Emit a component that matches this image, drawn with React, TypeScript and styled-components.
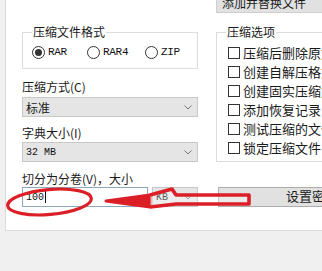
import React from 'react'
import styled, { createGlobalStyle } from 'styled-components'

const GlobalStyle = createGlobalStyle`
  html, body {
    margin: 0;
    padding: 0;
    background: #f0f0f0;
    overflow: hidden;
  }
  body {
    font-family: "Noto Sans CJK SC", "Noto Sans", sans-serif;
    font-size: 12px;
    color: #1a1a1a;
  }
`

const RED = '#dc1f26'

const Screen = styled.div`
  position: relative;
  width: 322px;
  height: 271px;
  overflow: hidden;
  background: #f0f0f0;
`

const Page = styled.div`
  margin-left: 5px;
  height: 231px;
  box-sizing: border-box;
  background: #fff;
  border-left: 1px solid #dadada;
  border-bottom: 1px solid #dcdcdc;
  padding-left: 16px;
  display: flex;
  flex-direction: column;
`

const TopRow = styled.div`
  height: 13px;
  padding-left: 194px;
`

const TopCombo = styled.div`
  margin-top: -8px;
  height: 21px;
  width: 140px;
  box-sizing: border-box;
  background: #e1e1e1;
  border: 1px solid #cfcfcf;
  padding-left: 5px;
  font-size: 12px;
  line-height: 19px;
  white-space: nowrap;
`

const Columns = styled.div`
  margin-top: 13px;
  display: flex;
  gap: 18px;
`

const LeftCol = styled.div`
  width: 176px;
  flex: none;
  display: flex;
  flex-direction: column;
`

const RightCol = styled.div`
  width: 160px;
  flex: none;
  display: flex;
  flex-direction: column;
`

const Group = styled.fieldset<{ $height: number }>`
  margin: 0;
  height: ${(p) => p.$height}px;
  box-sizing: border-box;
  border: 1px solid #dcdcdc;
  padding: 0 0 0 9px;
  min-width: 0;
`

const Legend = styled.legend`
  padding: 0 1px;
  font-size: 12px;
  line-height: 12px;
  height: 12px;
`

const RadioRow = styled.div`
  margin-top: 7px;
  display: grid;
  grid-template-columns: 55px 58px auto;
  align-items: center;
`

const RadioItem = styled.label`
  display: flex;
  align-items: center;
  gap: 3px;
  height: 14px;
`

const RadioCircle = styled.span<{ $checked?: boolean }>`
  width: 13px;
  height: 13px;
  box-sizing: border-box;
  border-radius: 50%;
  border: 1px solid #333;
  background: #fff;
  display: flex;
  align-items: center;
  justify-content: center;
  &::after {
    content: '';
    width: 7px;
    height: 7px;
    border-radius: 50%;
    background: ${(p) => (p.$checked ? '#333' : 'transparent')};
  }
`

const Mono = styled.span`
  font-family: "Liberation Mono", monospace;
  font-size: 11px;
  letter-spacing: -0.3px;
  color: #111;
`

const Label = styled.div<{ $top: number }>`
  margin-top: ${(p) => p.$top}px;
  height: 14px;
  line-height: 14px;
  font-size: 12px;
  white-space: nowrap;
`

const Combo = styled.div<{ $top?: number; $width?: number }>`
  margin-top: ${(p) => p.$top ?? 0}px;
  width: ${(p) => (p.$width ? `${p.$width}px` : '100%')};
  height: 20px;
  box-sizing: border-box;
  background: #e5e5e5;
  border: 1px solid #c8c8c8;
  display: flex;
  align-items: center;
  justify-content: space-between;
  padding: 0 5px 0 3px;
  font-size: 12px;
  flex: none;
`

const ComboMono = styled.span`
  font-family: "Liberation Mono", monospace;
  font-size: 10px;
  color: #111;
`

const InputRow = styled.div`
  margin-top: 1px;
  display: flex;
  gap: 4px;
`

const TextInput = styled.div`
  width: 126px;
  height: 20px;
  box-sizing: border-box;
  border: 1px solid #8fa7bb;
  background: #fff;
  display: flex;
  align-items: center;
  padding-left: 3px;
`

const Caret = styled.span`
  width: 1px;
  height: 12px;
  background: #111;
  margin-left: 1px;
`

const CheckList = styled.div`
  margin: 5px 0 0 2px;
  display: flex;
  flex-direction: column;
`

const CheckRow = styled.label`
  height: 19px;
  display: flex;
  align-items: center;
  gap: 3px;
  font-size: 13px;
  white-space: nowrap;
`

const CheckBox = styled.span`
  width: 12px;
  height: 12px;
  box-sizing: border-box;
  border: 1px solid #333;
  background: #fff;
  flex: none;
`

const Button = styled.div`
  margin-top: 25px;
  margin-left: 2px;
  height: 20px;
  width: 200px;
  box-sizing: border-box;
  background: #e1e1e1;
  border: 1px solid #adadad;
  padding-left: 67px;
  font-size: 13px;
  line-height: 16px;
  white-space: nowrap;
`

const Overlay = styled.svg`
  position: absolute;
  left: 0;
  top: 0;
  pointer-events: none;
`

const Chevron = () => (
  <svg width="8" height="5" viewBox="0 0 8 5">
    <polyline points="0.5,0.5 4,4 7.5,0.5" fill="none" stroke="#777" strokeWidth="1" />
  </svg>
)

const options = [
  '压缩后删除原文件',
  '创建自解压格式压缩文件',
  '创建固实压缩文件',
  '添加恢复记录',
  '测试压缩的文件',
  '锁定压缩文件',
]

export default function App() {
  return (
    <>
      <GlobalStyle />
      <Screen>
        <Page>
          <TopRow>
            <TopCombo>添加并替换文件</TopCombo>
          </TopRow>
          <Columns>
            <LeftCol>
              <Group $height={43}>
                <Legend>压缩文件格式</Legend>
                <RadioRow>
                  <RadioItem>
                    <RadioCircle $checked />
                    <Mono>RAR</Mono>
                  </RadioItem>
                  <RadioItem>
                    <RadioCircle />
                    <Mono>RAR4</Mono>
                  </RadioItem>
                  <RadioItem>
                    <RadioCircle />
                    <Mono>ZIP</Mono>
                  </RadioItem>
                </RadioRow>
              </Group>
              <Label $top={11}>压缩方式(C)</Label>
              <Combo $top={3}>
                <span>标准</span>
                <Chevron />
              </Combo>
              <Label $top={9}>字典大小(I)</Label>
              <Combo $top={2}>
                <ComboMono>32 MB</ComboMono>
                <Chevron />
              </Combo>
              <Label $top={10}>切分为分卷(V)，大小</Label>
              <InputRow>
                <TextInput>
                  <ComboMono>100</ComboMono>
                  <Caret />
                </TextInput>
                <Combo $width={46}>
                  <ComboMono>KB</ComboMono>
                  <Chevron />
                </Combo>
              </InputRow>
            </LeftCol>
            <RightCol>
              <Group $height={136}>
                <Legend>压缩选项</Legend>
                <CheckList>
                  {options.map((o) => (
                    <CheckRow key={o}>
                      <CheckBox />
                      {o}
                    </CheckRow>
                  ))}
                </CheckList>
              </Group>
              <Button>设置密码(P)...</Button>
            </RightCol>
          </Columns>
        </Page>
        <Overlay width="322" height="271" viewBox="0 0 322 271">
          <ellipse
            cx="49.5"
            cy="202"
            rx="42"
            ry="12.5"
            transform="rotate(-5 49.5 202)"
            fill="none"
            stroke={RED}
            strokeWidth="3.2"
          />
          <path
            d="M106 201 L150 195 L150 207 Z"
            fill={RED}
            stroke={RED}
            strokeWidth="3"
            strokeLinejoin="round"
          />
          <path
            d="M150 195 L172 189 L176 195 L249 195 L249 204 L176 204 L150 207"
            fill="rgba(255,255,255,0.3)"
            stroke={RED}
            strokeWidth="3.6"
            strokeLinejoin="round"
          />
        </Overlay>
      </Screen>
    </>
  )
}
